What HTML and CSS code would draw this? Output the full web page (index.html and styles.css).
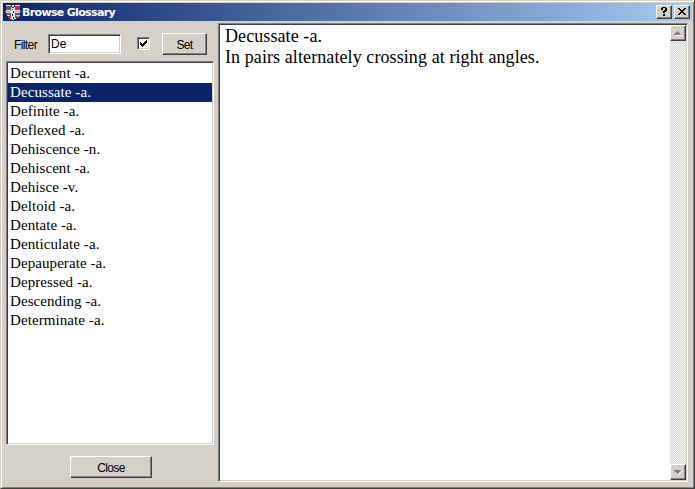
FILE: index.html
```html
<!DOCTYPE html>
<html lang="en">
<head>
<meta charset="utf-8">
<title>Browse Glossary</title>
<link rel="stylesheet" href="styles.css">
</head>
<body>
<div class="window">
  <header class="titlebar">
    <svg class="crest" width="16" height="16" viewBox="0 0 16 16" shape-rendering="crispEdges">
      <path fill="#d8e8e8" d="M1 1h14v10l-3 3-4 2-4-2-3-3z"/>
      <path fill="#d02838" d="M1 2h2v2H1zM4 2h2v2H4zM10 2h2v2h-2zM13 2h2v2h-2zM2 4h3v2H2zM11 4h3v2h-3zM1 9h2v2H1zM4 9h2v2H4zM10 9h2v2h-2zM13 9h2v2h-2zM3 12h3v2H3zM10 12h3v2h-3z"/>
      <path fill="#187868" d="M3 2h1v2H3zM12 2h1v2h-1zM1 4h1v2H1zM5 4h1v2H5zM10 4h1v2h-1zM14 4h1v2h-1zM3 9h1v2H3zM12 9h1v2h-1zM5 11h1v1H5zM10 11h1v1h-1z"/>
      <path fill="#48c8dc" d="M0 7h6v1H0zM10 7h6v1h-6z"/>
      <path fill="#182838" d="M6 1h1v2H6zM9 1h1v2H9zM7 3h2v1H7zM7 5h1v1H7zM8 7h1v2H8zM7 10h1v2H7zM8 13h1v2H8z"/>
    </svg>
    <h1 class="title">Browse Glossary</h1>
    <div class="controls">
      <button class="raised caption" aria-label="Help"><svg width="8" height="9" viewBox="0 0 8 9" shape-rendering="crispEdges"><path d="M2 0h4v1h1v3H6v1H5v1H3V4h1V3h1V1H3v2H1V1h1zM3 7h2v2H3z"/></svg></button>
      <button class="raised caption" aria-label="Close"><svg width="8" height="7" viewBox="0 0 8 7" shape-rendering="crispEdges"><path d="M0 0h2v1h1v1h2V1h1V0h2v1H7v1H6v1H5v1h1v1h1v1h1v1H6V6H5V5H3v1H2v1H0V6h1V5h1V4h1V3H2V2H1V1H0z"/></svg></button>
    </div>
  </header>
  <main class="content">
    <section class="sidebar">
      <div class="filter">
        <label class="label" for="filter"><span>Filter</span></label>
        <input class="sunken field" id="filter" value="De">
        <span class="sunken check"><svg width="7" height="7" viewBox="0 0 7 7" shape-rendering="crispEdges"><path d="M0 2h1v1h1v1h1V3h1V2h1V1h1V0h1v3H6v1H5v1H4v1H3v1H2V6H1V5H0z"/></svg></span>
        <button class="raised push set"><span>Set</span></button>
      </div>
      <ul class="sunken list">
        <li>Decurrent -a.</li>
        <li class="selected">Decussate -a.</li>
        <li>Definite -a.</li>
        <li>Deflexed -a.</li>
        <li>Dehiscence -n.</li>
        <li>Dehiscent -a.</li>
        <li>Dehisce -v.</li>
        <li>Deltoid -a.</li>
        <li>Dentate -a.</li>
        <li>Denticulate -a.</li>
        <li>Depauperate -a.</li>
        <li>Depressed -a.</li>
        <li>Descending -a.</li>
        <li>Determinate -a.</li>
      </ul>
      <button class="raised push close"><span>Close</span></button>
    </section>
    <section class="sunken detail">
      <div class="definition">
        <p class="term">Decussate -a.</p>
        <p>In pairs alternately crossing at right angles.</p>
      </div>
      <div class="scrollbar">
        <span class="raised arrow"><svg width="8" height="5" viewBox="0 0 8 5" shape-rendering="crispEdges"><path fill="#fff" d="M1 4h7v1H1z"/><path fill="#808080" d="M3 0h1v1h1v1h1v1h1v1H0V3h1V2h1V1h1z"/></svg></span>
        <span class="raised arrow"><svg width="8" height="5" viewBox="0 0 8 5" shape-rendering="crispEdges"><path fill="#fff" d="M7 1h1v1H7v1H6v1H5v1H4V4h1V3h1V2h1z"/><path fill="#808080" d="M0 0h7v1H6v1H5v1H4v1H3V3H2V2H1V1H0z"/></svg></span>
      </div>
    </section>
  </main>
</div>
</body>
</html>
```
FILE: styles.css
```css
* { box-sizing: border-box; }

body {
  margin: 0;
  overflow: hidden;
  font: 11px/13px "Liberation Sans", Arial, sans-serif;
  color: #000;
}

h1, p, ul { margin: 0; padding: 0; }

.window {
  display: flex;
  flex-direction: column;
  width: 695px;
  height: 489px;
  padding: 1px;
  background: #d4d0c8;
  border: 1px solid;
  border-color: #d4d0c8 #404040 #404040 #d4d0c8;
  box-shadow: inset 1px 1px #fff, inset -1px -1px #808080;
}

.titlebar {
  display: flex;
  align-items: center;
  height: 18px;
  margin: 1px 1px 0;
  padding: 0 2px;
  background: linear-gradient(90deg, #0a246a, #a6caf0);
}

.crest { flex: none; }

.title {
  margin-left: 1px;
  padding-top: 1px;
  color: #fff;
  font: bold 11px/16px "DejaVu Sans", sans-serif;
  letter-spacing: -0.66px;
  white-space: nowrap;
}

.controls { display: flex; gap: 2px; margin-left: auto; }

.raised {
  display: flex;
  align-items: center;
  justify-content: center;
  flex: none;
  padding: 0;
  background: #d4d0c8;
  border: 1px solid;
  border-color: #fff #404040 #404040 #fff;
  box-shadow: inset -1px -1px #808080;
}

.caption { width: 16px; height: 14px; }
.caption svg { margin: 0 1px 1px 0; }

.sunken {
  background: #fff;
  border: 1px solid;
  border-color: #808080 #fff #fff #808080;
  box-shadow: inset 1px 1px #404040, inset -1px -1px #d4d0c8;
}

.content {
  display: flex;
  flex: 1;
  min-height: 0;
  padding: 2px 5px 5px 4px;
}

.sidebar { width: 208px; }

.filter {
  display: flex;
  align-items: flex-start;
  height: 38px;
  padding: 11px 0 0 8px;
}

.label { width: 34px; padding-top: 5px; font-size: 12px; }
.label span { letter-spacing: -0.6px; }

.field {
  width: 73px;
  height: 20px;
  padding: 0 2px 1px;
  font: 12px "Liberation Sans", Arial, sans-serif;
}

.check {
  width: 13px;
  height: 13px;
  margin: 3px 0 0 16px;
  padding: 2px;
}
.check svg { display: block; }

.push {
  padding-top: 1px;
  font: 12px/14px "Liberation Sans", Arial, sans-serif;
  letter-spacing: -0.7px;
}
.set { width: 45px; height: 22px; margin: -1px 0 0 12px; }

.list {
  height: 384px;
  padding: 2px 1px;
  list-style: none;
  font: 15px/19px "Liberation Serif", "Times New Roman", serif;
  letter-spacing: 0.08px;
}
.list li { padding-left: 2px; white-space: nowrap; }
.list .selected { background: #0a246a; color: #fff; }

.close { width: 82px; height: 22px; margin: 11px 0 0 64px; letter-spacing: -0.6px; }

.detail {
  display: flex;
  width: 470px;
  margin-left: 4px;
  padding: 1px;
}

.definition {
  flex: 1;
  padding: 1px 5px;
  font: 18px/21px "Liberation Serif", "Times New Roman", serif;
  letter-spacing: 0.09px;
  white-space: nowrap;
}

.scrollbar {
  display: flex;
  flex-direction: column;
  justify-content: space-between;
  width: 16px;
  background: repeating-conic-gradient(#fff 0 25%, #d4d0c8 0 50%) 0 0 / 2px 2px;
}
.arrow { width: 16px; height: 16px; }
```
